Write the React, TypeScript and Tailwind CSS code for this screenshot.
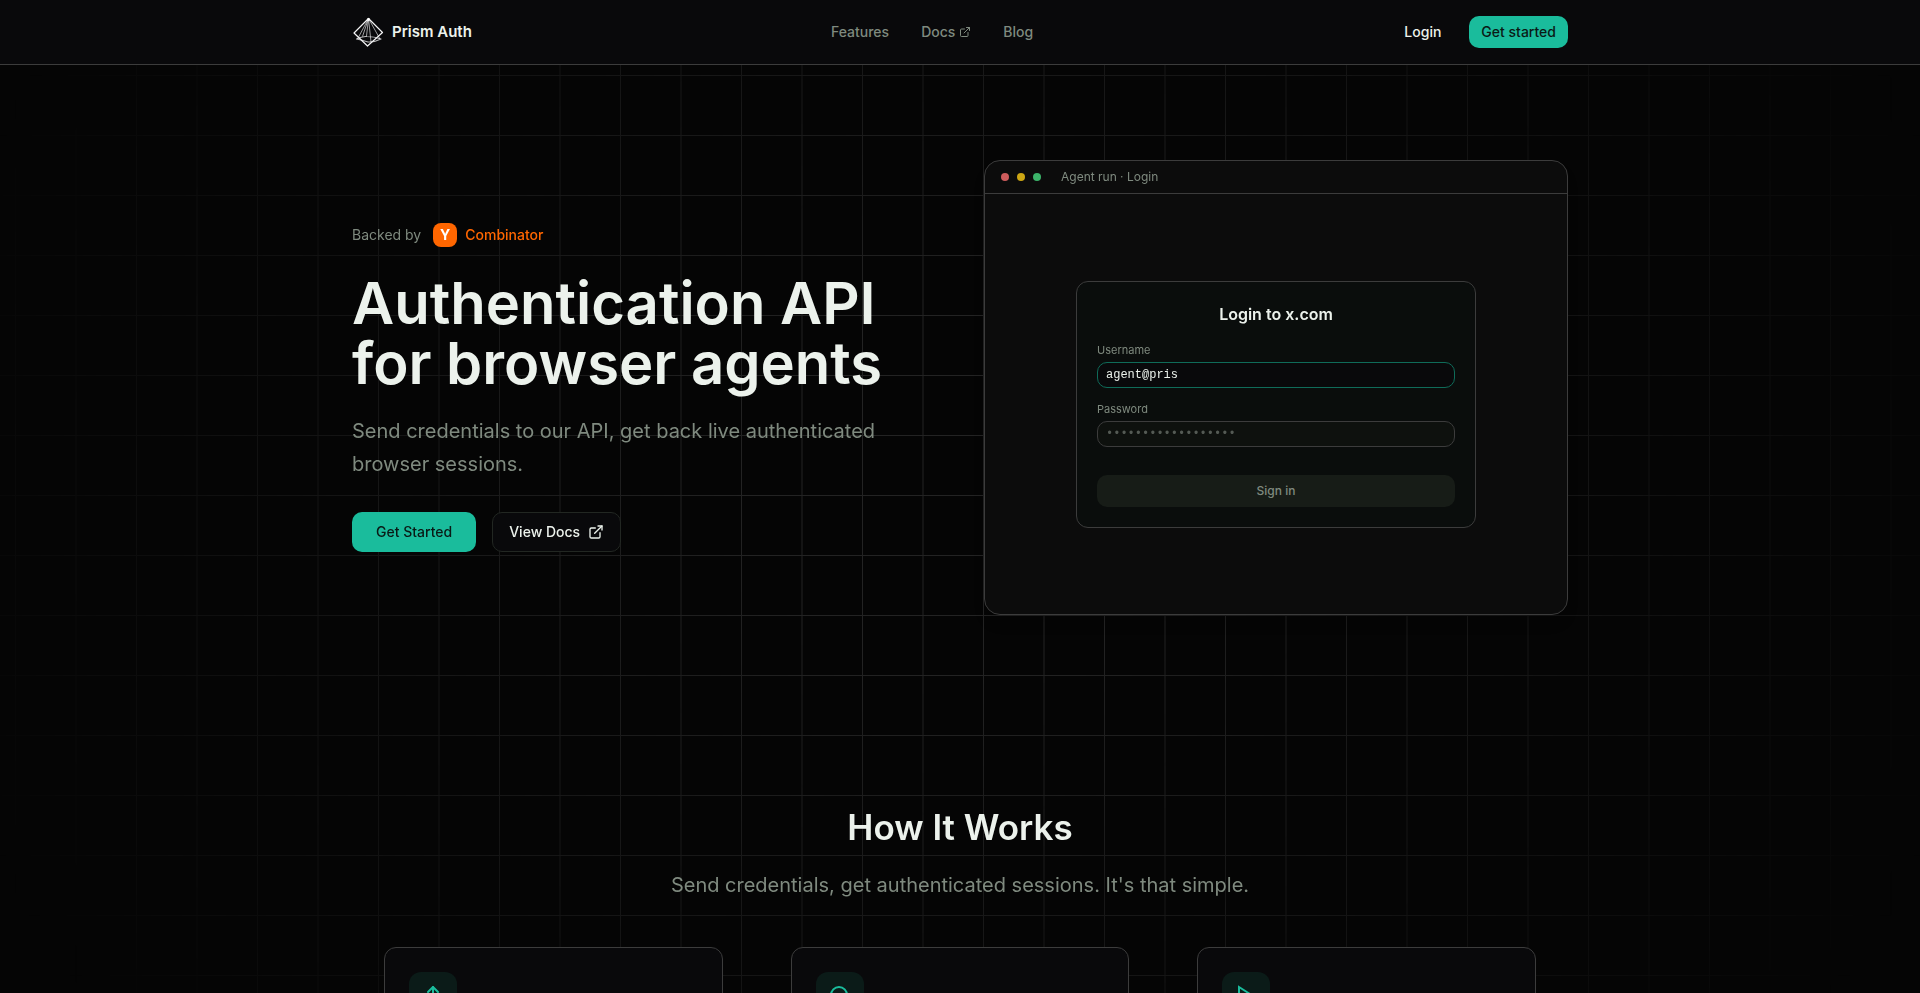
import { ExternalLink, Search, Upload } from "lucide-react";

const PlayIcon = () => (
  <svg
    viewBox="0 0 24 24"
    className="w-6 h-6"
    fill="none"
    stroke="currentColor"
    strokeWidth="2"
    strokeLinecap="round"
    strokeLinejoin="miter"
    aria-hidden="true"
  >
    <polygon points="5 3 19 12 5 21" />
  </svg>
);

const steps = [
  { id: "send", icon: <Upload size={24} /> },
  { id: "verify", icon: <Search size={24} /> },
  { id: "run", icon: <PlayIcon /> },
];

const Logo = () => (
  <svg
    viewBox="0 0 32 32"
    className="w-8 h-8"
    fill="none"
    stroke="#f4f4f5"
    strokeLinejoin="round"
    aria-hidden="true"
  >
    <path d="M16.500 2.500 L30.500 16.500 L15.500 30 L2 17 Z" strokeWidth="1.2" />
    <path
      d="M16.500 2.500 L5.500 23 M16.500 2.500 L10.500 20.500 M16.500 2.500 L14.500 20 M16.500 2.500 L19 26 M16.500 2.500 L28 23"
      strokeWidth="0.9"
      opacity="0.7"
    />
    <path
      d="M4.500 23 Q10 20 15 20.500 Q22 20.500 29 23 Q22 26.500 16 26 Q10 24 4.500 23 Z"
      strokeWidth="1.1"
      opacity="0.75"
    />
    <circle cx="16.5" cy="3.5" r="1.4" fill="#fff" stroke="none" />
  </svg>
);

const Grid = () => (
  <svg
    className="fixed inset-0 w-full h-full pointer-events-none [mask-image:radial-gradient(55%_90%_at_50%_50%,black_20%,transparent_100%)]"
    aria-hidden="true"
  >
    <defs>
      <pattern id="grid" x="15" y="15" width="121" height="60" patternUnits="userSpaceOnUse">
        <path d="M0 0 H121 V1 H0 Z M0 0 H1 V60 H0 Z M60.500 0 H61.500 V60 H60.500 Z" fill="#232323" />
      </pattern>
    </defs>
    <rect width="100%" height="100%" fill="url(#grid)" />
  </svg>
);

const Header = () => {
  return (
    <header className="relative bg-[#09090b] border-b border-[#3c3c3c]">
      <div className="max-w-[1216px] mx-auto h-16 flex items-center justify-between">
        <a href="#" className="flex items-center gap-2 text-[15px] text-[#ecf2ec] font-semibold">
          <Logo />
          Prism Auth
        </a>
        <nav className="flex items-center gap-8 text-sm font-medium text-[#7f8a7f]">
          <a href="#features">Features</a>
          <a href="#docs" className="flex items-center gap-1">
            Docs <ExternalLink size={12} />
          </a>
          <a href="#blog">Blog</a>
        </nav>
        <div className="flex items-center gap-4 text-sm font-medium">
          <a href="#login" className="px-3 text-[#ecf2ec]">
            Login
          </a>
          <button className="h-8 px-3 rounded-[10px] bg-[#1abc9c] text-[#0a1a16]">
            Get started
          </button>
        </div>
      </div>
    </header>
  );
};

const LoginDemo = () => {
  return (
    <div className="flex flex-col rounded-2xl border border-[#3c3c3c] bg-[#0c0c0c] shadow-lg overflow-hidden">
      <div className="h-[33px] shrink-0 flex items-center px-4 border-b border-[#3c3c3c]">
        <div className="flex gap-2">
          <span className="w-2 h-2 rounded-full bg-[#cd5c5c]" />
          <span className="w-2 h-2 rounded-full bg-[#cca614]" />
          <span className="w-2 h-2 rounded-full bg-[#3cb46a]" />
        </div>
        <span className="ml-5 text-xs text-[#7f8a7f]">Agent run · Login</span>
      </div>
      <div className="min-h-[420px] flex items-center justify-center">
        <form className="w-[400px] p-5 rounded-xl border border-[#3c3c3c] bg-[#0a0d0c] flex flex-col">
          <div className="text-center text-base font-semibold text-[#ecf2ec] mb-4">
            Login to x.com
          </div>
          <label htmlFor="username" className="text-[11px] leading-4 text-[#7f8a7f] mb-1">
            Username
          </label>
          <input
            id="username"
            type="text"
            defaultValue="agent@pris"
            className="h-[26px] px-2 mb-[13px] rounded-[10px] border border-[#0f6b59] bg-[#09090b] text-xs text-[#ecf2ec] font-['Liberation_Mono',monospace]"
          />
          <label htmlFor="password" className="text-[11px] leading-4 text-[#7f8a7f] mb-1">
            Password
          </label>
          <input
            id="password"
            type="password"
            placeholder="••••••••••••••••••"
            className="h-[26px] px-2 mb-7 rounded-[10px] border border-[#3c3c3c] bg-[#0e110e] text-xs placeholder:text-[#545a54] font-['Liberation_Mono',monospace]"
          />
          <button type="button" className="h-8 rounded-[10px] bg-[#171c17] text-xs font-medium text-[#7f8a7f]">
            Sign in
          </button>
        </form>
      </div>
    </div>
  );
};

const Hero = () => {
  return (
    <section className="max-w-[1216px] mx-auto pt-[95px] pb-48 grid grid-cols-2 gap-12 items-center">
      <div className="flex flex-col">
        <div className="flex items-center text-sm text-[#7f8a7f]">
          Backed by
          <span className="ml-3 w-6 h-6 rounded-lg bg-[#ff6600] text-white font-bold flex items-center justify-center">
            Y
          </span>
          <span className="ml-2 font-medium text-[#ff6600]">Combinator</span>
        </div>
        <h1 className="mt-[26px] text-[58px] leading-[60px] font-semibold whitespace-nowrap text-[#ecf2ec]">
          Authentication API
          <br />
          for browser agents
        </h1>
        <p className="mt-[22px] text-xl leading-[33px] text-[#7f8a7f]">
          Send credentials to our API, get back live authenticated browser sessions.
        </p>
        <div className="mt-[31px] flex gap-4 text-sm font-medium">
          <button className="h-10 px-6 rounded-[10px] bg-[#1abc9c] text-[#0a1a16]">
            Get Started
          </button>
          <a
            href="#docs"
            className="h-10 px-4 flex items-center gap-2 rounded-[10px] border border-[#222722] bg-[#09090b] text-[#ecf2ec]"
          >
            View Docs <ExternalLink size={16} />
          </a>
        </div>
      </div>
      <LoginDemo />
    </section>
  );
};

const HowItWorks = () => {
  return (
    <section id="features" className="max-w-[1152px] mx-auto pb-24">
      <h2 className="text-center text-[35px] leading-10 font-semibold text-[#ecf2ec]">
        How It Works
      </h2>
      <p className="mt-6 text-center text-xl text-[#7f8a7f]">
        Send credentials, get authenticated sessions. It's that simple.
      </p>
      <div className="mt-12 grid grid-cols-3 gap-[68px]">
        {steps.map((step) => (
          <div key={step.id} className="min-h-48 p-6 rounded-xl border border-[#3c3c3c] bg-[#09090b]">
            <div className="w-12 h-12 rounded-xl bg-[#0b1b18] text-[#1abc9c] flex items-center justify-center">
              {step.icon}
            </div>
          </div>
        ))}
      </div>
    </section>
  );
};

const App = () => {
  return (
    <div className="min-h-screen bg-[#050505] font-['Inter',sans-serif]">
      <Grid />
      <Header />
      <main className="relative">
        <Hero />
        <HowItWorks />
      </main>
    </div>
  );
};

export default App;
